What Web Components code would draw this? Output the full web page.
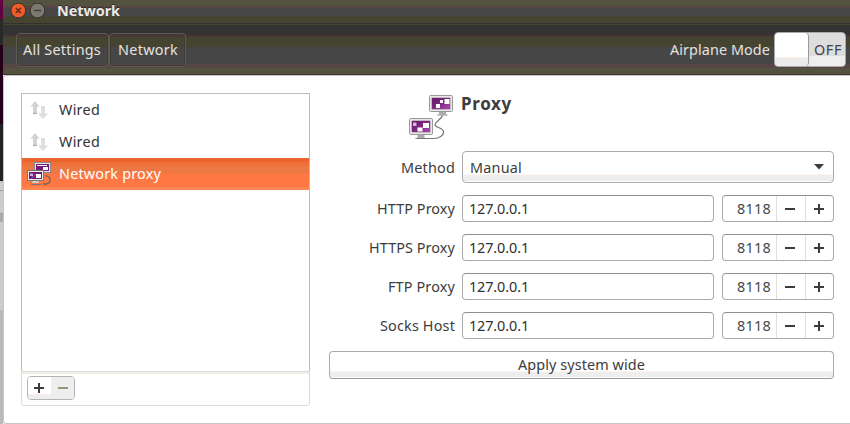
<!DOCTYPE html>
<html lang="en"><head><meta charset="utf-8"><title>Network</title>
<style>
html,body{margin:0;height:100%;overflow:hidden;background:#fff}
body{font:14.4px/20px "Noto Sans",sans-serif;color:#3c3c3c}
</style></head><body>
<network-window></network-window>
<script>
const define=(name,html,setup)=>customElements.define(name,class extends HTMLElement{
  constructor(){super();this.attachShadow({mode:'open'}).innerHTML=html;}
  connectedCallback(){if(setup)setup(this,this.shadowRoot);}
});
const meter=document.createElement('canvas').getContext('2d');

/* A label whose tracking is adjusted so that the words fill the width in "w". */
define('fit-text',`<style>:host{display:block;white-space:nowrap;flex:none;text-align:left}</style><slot></slot>`,el=>{
  const cs=getComputedStyle(el),t=el.textContent,w=+el.getAttribute('w');
  meter.font=`${cs.fontWeight} ${cs.fontSize} ${cs.fontFamily}`;
  el.style.width=w+'px';
  el.style.letterSpacing=((w-meter.measureText(t).width)/t.length)+'px';
});

define('wired-icon',`<style>:host{display:block;width:24px;height:24px}svg{display:block}</style>
<svg width="24" height="24"><path d="M8 3 3.500 8.500h2.500V15h4V8.500h2.500z" fill="#d3d3d3"/><path d="M16 21l5-5.500h-3V8h-4v7.500h-3z" fill="#dededc"/><path d="M6 15.500h4" stroke="#aaa"/></svg>`);

define('proxy-icon',`<style>:host{display:block}svg{display:block;width:100%;height:100%}</style>
<svg viewBox="0 0 46 46"><defs><linearGradient id="g" x2="1" y2="1"><stop stop-color="#611060"/><stop offset=".55" stop-color="#852a85"/><stop offset="1" stop-color="#b34eb8"/></linearGradient></defs>
<path d="M33.500 21.500c-1 4-7 6-7.500 9s8 3 8.500 7-5 7-9 7H16" fill="none" stroke="#777" stroke-width="1.200"/>
<path d="M30 18h7v2.500h-7z" fill="#aaa"/><path d="M28.500 21h10" stroke="#888"/>
<rect x="20.500" y="1.500" width="23" height="16" rx="1" fill="#e9e9e9" stroke="#999"/><rect x="23" y="4" width="18" height="11" fill="url(#g)" stroke="#704070" stroke-width=".6"/>
<path d="M31 6h3v3h-3zM35.500 5h5v5h-5zM27 10h4v4h-4z" fill="#fff"/>
<path d="M8.500 41h7v3h-7z" fill="#aaa"/><path d="M6.500 44.500H18" stroke="#777"/>
<rect x="0.500" y="24.500" width="23" height="16" rx="1" fill="#e9e9e9" stroke="#999"/><rect x="3" y="27" width="18" height="11" fill="url(#g)" stroke="#704070" stroke-width=".6"/>
<path d="M14 29h6v5h-6zM8.500 33.500h5v4h-5z" fill="#fff"/><path d="M4 28.500h3.500V32H4z" fill="#dbb6dd"/></svg>`);

define('proxy-small-icon',`<style>:host{display:block;width:26px;height:26px}svg{display:block}</style>
<svg width="26" height="26"><path d="M16 23h3q5-1 4-5t-5-3" fill="none" stroke="#74665f" stroke-width="1.300"/>
<rect x="7.500" y="1.500" width="16" height="10" fill="#e4e4e4" stroke="#8b8b8b"/><path d="M9 3h13v7H9z" fill="#741a72"/><path d="M10 4h10v1H10zM16 6h5v3h-5z" fill="#fff"/>
<path d="M6 19h5l1 3H5z" fill="#ccc"/><path d="M4 23.500h10" stroke="#777"/>
<rect x=".5" y="9.500" width="16" height="10" fill="#ededed" stroke="#777"/><path d="M2 11h13v7H2z" fill="#741a72"/><path d="M9 13h5v4H9z" fill="#fff"/><path d="M3 12.500h3V15H3z" fill="#d5a6d6"/><path d="M4 18l5-5" stroke="#a558aa"/></svg>`);

define('plus-minus',`<style>:host{display:grid;place-items:center;box-sizing:border-box;color:#3c3c3c}svg{display:block}</style><svg width="10" height="10"><path stroke="currentColor" stroke-width="2"/></svg>`,(el,r)=>{
  r.querySelector('path').setAttribute('d',el.getAttribute('kind')==='plus'?'M0 5h10M5 0v10':'M0 5h10');
});

define('title-bar',`<style>
:host{display:flex;height:24px;color:#ece9e4;font-weight:700;box-sizing:border-box;padding:3px 0 0 5px;background:linear-gradient(#53523f 0 6px,#594444 6px 8px,#474747 8px 16px,#444431 16px 23px,#352f2d 23px)}
svg{display:block;width:39px;height:16px;margin-right:10px;flex:none}fit-text{margin-top:-2px;text-shadow:0 -1px #292929}</style>
<svg viewBox="0 0 39 16"><circle cx="10.300" cy="7.500" r="7.400" fill="#ef5b2b" stroke="#343027"/><path d="M7.800 5l5 5m0-5L7.800 10" stroke="#5b2818" stroke-width="1.300"/><circle cx="29.500" cy="7.500" r="7.400" fill="#797970" stroke="#343027"/><path d="M26 7.500h7" stroke="#393939" stroke-width="1.300"/></svg>
<fit-text w="63">Network</fit-text>`);

define('off-switch',`<style>:host{display:flex;box-sizing:border-box;width:72px;height:35px;border:1px solid #aaa;border-radius:4px;background:linear-gradient(#ddd 0 23px,#eee 23px);color:#3d414b}
i{width:34px;box-sizing:border-box;border-right:1px solid #999;border-radius:4px;background:linear-gradient(#fff 0 24px,#fdf0e7 24px 25px,#ececec 25px)}fit-text{margin:7px 0 0 5px}</style><i></i><fit-text w="28">OFF</fit-text>`);

define('tool-bar',`<style>
:host{display:flex;align-items:center;height:51px;box-sizing:border-box;padding:0 4px 0 13px;color:#e5e2dc;background:linear-gradient(#444431 0 1px,#333 1px 11px,#493737 11px 13px,#444431 13px 23px,#464646 23px 40px,#584545 40px 44px,#545340 44px 50px,#393529 50px)}
b{display:flex;align-items:center;font-weight:400;box-sizing:border-box;height:34px;border:1px solid #5d5c52;border-radius:4px;padding:1px 7px 0 6px;box-shadow:inset 0 0 0 1px #3c3b34}
b+b{padding-left:8px}.air{margin-left:auto;margin-right:4px;padding-top:1px}</style>
<b><fit-text w="78">All Settings</fit-text></b><b><fit-text w="60">Network</fit-text></b><fit-text class="air" w="100">Airplane Mode</fit-text><off-switch></off-switch>`);

define('device-row',`<style>:host{display:flex;align-items:center;height:32px;box-sizing:border-box;color:#333}
:host([selected]){color:#fff;background:linear-gradient(#ec642e 0 4px,#ef7139 4px 8px,#ee7843 8px 16px,#ff7844 16px 29px,#ff8652 29px)}
span{width:37px;display:grid;justify-content:start;flex:none;box-sizing:border-box;padding-left:5px}</style><span><slot name="icon"></slot></span><slot></slot>`);

define('device-list',`<style>
:host{display:flex;flex-direction:column;width:289px;height:313px;box-sizing:border-box}
.list{height:278px;box-sizing:border-box;border:1px solid #bcbcbc;border-bottom:0;flex:none}
.foot{flex:1;box-sizing:border-box;border:1px solid #ddddd3;border-radius:0 0 3px 3px;padding:4px 0 0 5px;background:linear-gradient(#eee 0 2px,#fffff0 2px 3px,#fff 3px)}
.pair{display:flex;width:48px;height:24px;box-sizing:border-box;border:1px solid #b5b5b5;border-radius:4px;overflow:hidden}.pair plus-minus{width:23px}.pair .off{color:#96967e;background:#eee}.pair .on{padding-right:1px;background:linear-gradient(#fff 0 17px,#fcebe5 17px 18px,#eee 18px)}</style>
<div class="list"><device-row><wired-icon slot="icon"></wired-icon><fit-text w="41">Wired</fit-text></device-row><device-row><wired-icon slot="icon"></wired-icon><fit-text w="41">Wired</fit-text></device-row><device-row selected><proxy-small-icon slot="icon"></proxy-small-icon><fit-text w="102">Network proxy</fit-text></device-row></div>
<div class="foot"><div class="pair"><plus-minus class="on" kind="plus"></plus-minus><plus-minus class="off" kind="minus"></plus-minus></div></div>`);

define('field-row',`<style>:host{display:grid;grid-template-columns:126px 252px 112px;column-gap:7px;height:27px;align-items:stretch}
.l{display:flex;justify-content:flex-end;align-items:center}.e,.s{box-sizing:border-box;border:1px solid #aaa;border-top-color:#909090;border-radius:4px;display:flex;align-items:center;background:#fff;color:#303030}
.e{padding-left:6px}.s{margin-left:1px;width:112px;padding-left:14px}.s fit-text{margin-right:5px;color:#484848}.s plus-minus{width:29px;height:25px;padding-right:2px;border-left:1px solid #e2dedb}.s plus-minus+plus-minus{padding-right:1px;width:29px}</style>
<div class="l"><slot></slot></div><div class="e"><fit-text w="60">127.0.0.1</fit-text></div><div class="s"><fit-text w="34">8118</fit-text><plus-minus kind="minus"></plus-minus><plus-minus kind="plus"></plus-minus></div>`);

define('proxy-panel',`<style>
:host{display:flex;flex-direction:column;width:505px}
.head{display:flex;height:58px;padding-left:80px}.head proxy-icon{width:46px;height:46px;margin-top:1px}.head fit-text{font-size:17px;font-weight:700;margin:1px 0 0 6px}
.method{display:flex;justify-content:flex-end;align-items:center;height:32px}.select{display:flex;align-items:center;box-sizing:border-box;width:372px;height:32px;margin-left:7px;border:1px solid #aaa;border-radius:4px;padding:0 9px 0 7px;background:linear-gradient(#fff 0 22px,#fff5ed 22px 23px,#eee 23px 29px,#fff 29px)}
svg{margin-left:auto}.rows{display:grid;gap:12px;margin-top:12px}.method fit-text{padding-top:1px}
.apply{display:flex;align-items:center;justify-content:center;box-sizing:border-box;height:28px;margin-top:12px;border:1px solid #aaa;border-bottom-color:#969696;border-radius:4px;background:linear-gradient(#fff 0 19px,#fff5ed 19px 20px,#eee 20px 25px,#fff 25px)}</style>
<div class="head"><proxy-icon></proxy-icon><fit-text w="51">Proxy</fit-text></div>
<div class="method"><fit-text w="54">Method</fit-text><div class="select"><fit-text w="52">Manual</fit-text><svg width="10" height="6"><path d="M0 0h10L5 5.500z" fill="#3c3c3c"/></svg></div></div>
<div class="rows"><field-row><fit-text w="78">HTTP Proxy</fit-text></field-row><field-row><fit-text w="86">HTTPS Proxy</fit-text></field-row><field-row><fit-text w="67">FTP Proxy</fit-text></field-row><field-row><fit-text w="75">Socks Host</fit-text></field-row></div>
<div class="apply"><fit-text w="127">Apply system wide</fit-text></div>`);

define('network-window',`<style>
:host{display:grid;grid-template-columns:3px 847px;height:424px}
.edge{background:linear-gradient(#640040 0 19px,#292929 19px 45px,#24001b 45px 124px,#222 124px 181px,#bbb 181px 182px,#ccc 182px 190px,#999 190px 191px,#ccc 191px 213px,#999 213px 214px,#aaa 214px 222px,#ccc 222px 310px,#b9b9b9 310px)}
main{display:flex;flex-direction:column}.body{flex:1;display:flex;box-sizing:border-box;border:1px solid #c6c6c6;border-right:0;border-radius:3px 0 0 3px;padding:17px 0 0 17px}
proxy-panel{margin-left:19px}</style><div class="edge"></div><main><title-bar></title-bar><tool-bar></tool-bar><div class="body"><device-list></device-list><proxy-panel></proxy-panel></div></main>`);
</script></body></html>
